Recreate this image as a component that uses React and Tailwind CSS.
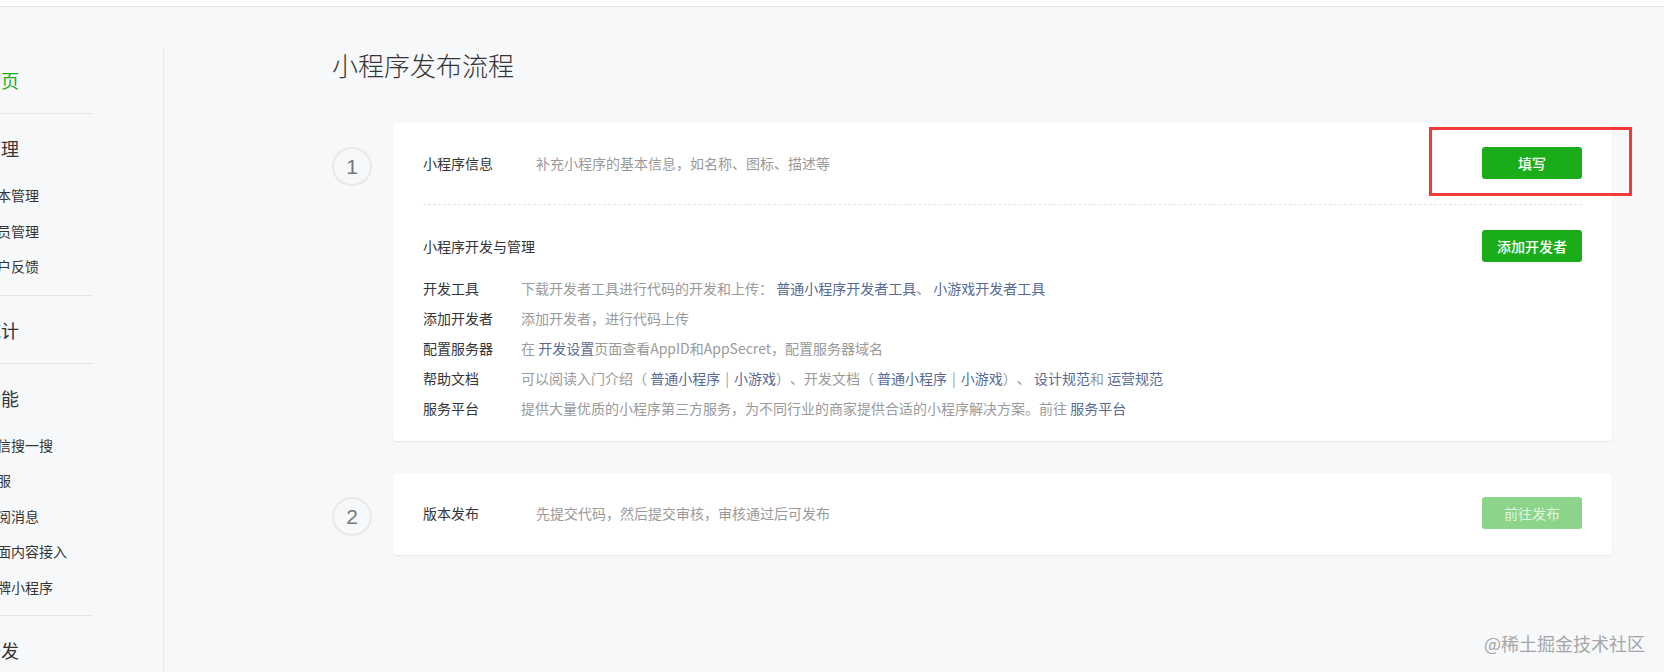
import React from "react";

const menu = [
  { title: "首页", active: true, children: [] },
  { title: "管理", children: ["版本管理", "成员管理", "用户反馈"] },
  { title: "统计", children: [] },
  {
    title: "功能",
    children: ["微信搜一搜", "客服", "订阅消息", "页面内容接入", "品牌小程序"],
  },
  { title: "开发", children: [] },
];

function Link({ children }) {
  return <span className="text-[#576b95]">{children}</span>;
}

// separator between links, a little wider than a plain " | "
function Pipe() {
  return <span className="mx-[5px]">|</span>;
}

const rows = [
  {
    label: "开发工具",
    value: (
      <>
        下载开发者工具进行代码的开发和上传： <Link>普通小程序开发者工具</Link>、{" "}
        <Link>小游戏开发者工具</Link>
      </>
    ),
  },
  { label: "添加开发者", value: <>添加开发者，进行代码上传</> },
  {
    label: "配置服务器",
    value: (
      <>
        在 <Link>开发设置</Link>页面查看AppID和AppSecret，配置服务器域名
      </>
    ),
  },
  {
    label: "帮助文档",
    value: (
      <>
        可以阅读入门介绍（ <Link>普通小程序</Link>
        <Pipe />
        <Link>小游戏</Link>）、开发文档（ <Link>普通小程序</Link>
        <Pipe />
        <Link>小游戏</Link>）、 <Link>设计规范</Link>和 <Link>运营规范</Link>
      </>
    ),
  },
  {
    label: "服务平台",
    value: (
      <>
        提供大量优质的小程序第三方服务，为不同行业的商家提供合适的小程序解决方案。前往{" "}
        <Link>服务平台</Link>
      </>
    ),
  },
];

function StepCircle({ n }) {
  return (
    <div
      className="mt-6 flex h-[39px] w-[40px] shrink-0 items-center justify-center rounded-full border-2 border-[#e8e9eb] text-[21px] text-[#777]"
      style={{ fontFamily: '"Liberation Sans", Arial, sans-serif' }}
    >
      {n}
    </div>
  );
}

function GreenButton({ children, disabled }) {
  return (
    <button
      className={
        disabled
          ? "h-8 w-[100px] rounded-[3px] bg-[#8bd489] text-[14px] text-[#e2f4e1]"
          : "h-8 w-[100px] rounded-[3px] bg-[#1aad19] text-[14px] font-medium text-white"
      }
    >
      {children}
    </button>
  );
}

export default function App() {
  return (
    <div
      className="relative h-[672px] overflow-hidden bg-[#f7f8fa] text-[#353535] [text-spacing-trim:space-all]"
      style={{ fontFamily: '"Noto Sans CJK SC", "Noto Sans", sans-serif' }}
    >
      {/* top bar */}
      <div className="h-[7px] border-b border-[#e3e4e6] bg-white" />

      <div className="flex">
        {/* sidebar */}
        <div className="mt-[40px] h-[640px] w-[164px] shrink-0 border-r border-[#e7e8ea]">
          <div className="-ml-[17px] -mt-[1px] w-[110px]">
            {menu.map((g, i) => (
              <div
                key={g.title}
                className={
                  (i < menu.length - 1 ? "border-b border-[#e5e6e8] " : "") +
                  (g.children.length ? "pb-[10px] pt-[16px]" : "pb-[15px] pt-[16px]")
                }
              >
                <div
                  className={
                    g.active
                      ? "text-[18px] leading-[36px] text-[#1aad19]"
                      : "text-[18px] leading-[36px] text-[#353535]"
                  }
                >
                  {g.title}
                </div>
                {g.children.length > 0 && (
                  <div className="pt-[12px]">
                    {g.children.map((c) => (
                      <div key={c} className="text-[14px] leading-[35.5px] text-[#353535]">
                        {c}
                      </div>
                    ))}
                  </div>
                )}
              </div>
            ))}
          </div>
        </div>

        {/* main */}
        <div className="flex-1 pl-[168px] pr-[52px] pt-[40px]">
          <h1 className="text-[26px] font-light leading-[36px] text-[#353535]">小程序发布流程</h1>

          <div className="mt-[40px] flex">
            <StepCircle n={1} />
            <div className="ml-[21px] flex-1 rounded-[4px] bg-white px-[30px] shadow-[0_1px_2px_rgba(0,0,0,0.07)]">
              <div className="flex items-center justify-between border-b border-dashed border-[#e5e5e5] pb-[25px] pt-6">
                <div className="flex items-center text-[14px]">
                  <span className="w-[113px]">小程序信息</span>
                  <span className="text-[#9a9a9a]">补充小程序的基本信息，如名称、图标、描述等</span>
                </div>
                <GreenButton>填写</GreenButton>
              </div>

              <div className="pb-[18px] pt-[25px]">
                <div className="flex items-center justify-between">
                  <span className="text-[14px]">小程序开发与管理</span>
                  <GreenButton>添加开发者</GreenButton>
                </div>
                <div className="mt-[11px] text-[14px] leading-[30px]">
                  {rows.map((r) => (
                    <div key={r.label} className="flex">
                      <span className="w-[98px] shrink-0">{r.label}</span>
                      <span className="text-[#9a9a9a]">{r.value}</span>
                    </div>
                  ))}
                </div>
              </div>
            </div>
          </div>

          <div className="mt-[32px] flex">
            <StepCircle n={2} />
            <div className="ml-[21px] flex flex-1 items-center justify-between rounded-[4px] bg-white px-[30px] pb-[26px] pt-6 shadow-[0_1px_2px_rgba(0,0,0,0.07)]">
              <div className="flex items-center text-[14px]">
                <span className="w-[113px]">版本发布</span>
                <span className="text-[#9a9a9a]">先提交代码，然后提交审核，审核通过后可发布</span>
              </div>
              <GreenButton disabled>前往发布</GreenButton>
            </div>
          </div>
        </div>
      </div>

      {/* annotation box */}
      <div className="absolute left-[1429px] top-[127px] h-[69px] w-[203px] border-[3px] border-[#f23a3a]" />

      {/* watermark */}
      <div className="absolute left-[1484px] top-[630px] text-[18px] leading-[26px] text-[#a6a6a6]">
        @稀土掘金技术社区
      </div>
    </div>
  );
}
